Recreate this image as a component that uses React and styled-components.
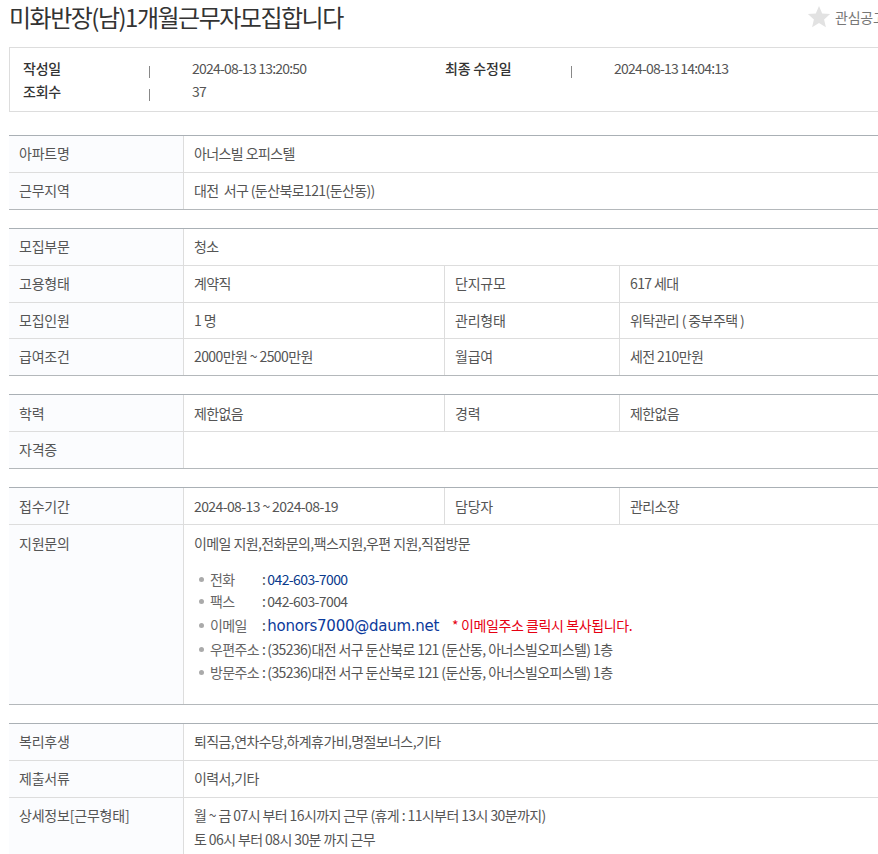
import React from 'react';
import styled, { createGlobalStyle } from 'styled-components';

const Global = createGlobalStyle`
  html, body { margin: 0; padding: 0; background: #fff; overflow: hidden; }
  body { font-family: "Noto Sans CJK KR", "Noto Sans", sans-serif; font-size: 14px; color: #555; letter-spacing: -0.2px; }
`;
const Page = styled.div`
  width: 900px;
  height: 854px;
  padding-left: 9px;
  overflow: hidden;
  box-sizing: border-box;
`;
const Head = styled.header`
  display: flex;
  justify-content: space-between;
  align-items: center;
  height: 47px;
  padding-bottom: 14px;
  box-sizing: border-box;
  width: 891px;
`;
const Title = styled.h1`
  margin: 0;
  font-size: 24px;
  font-weight: 400;
  color: #333;
  letter-spacing: -1.5px;
  line-height: 33px;
`;
const Fav = styled.div`
  display: flex;
  align-items: center;
  gap: 4px;
  color: #777;
  white-space: nowrap;
  width: 82px;
  overflow: hidden;
  margin-right: 11px;
`;
const Summary = styled.section`
  border: 1px solid #ddd;
  box-sizing: border-box;
  height: 65px;
  width: 891px;
  padding: 8px 13px 0;
  display: grid;
  grid-template-columns: 126px 43px 253px 126px 43px 253px;
  grid-auto-rows: 23px;
  align-items: center;
  margin-bottom: 23px;
`;
const SumLabel = styled.strong`
  font-weight: 500;
  color: #333;
`;
const SumSep = styled.span`
  display: block;
  width: 1px;
  height: 12px;
  margin-top: 8px;
  background: #888;
`;
const SumValue = styled.span`
  letter-spacing: -0.8px;
`;
const N = styled.span`
  letter-spacing: -0.6px;
`;
const Block = styled.section`
  width: 891px;
  border-top: 1px solid #aab0b5;
  border-bottom: 1px solid #b4b8bb;
  margin-bottom: 18px;
  &:last-child { border-bottom: 0; margin-bottom: 0; }
`;
const Row = styled.div`
  display: grid;
  grid-template-columns: ${p => p.$split ? '174px 261px 175px 1fr' : '174px 1fr'};
  min-height: ${p => p.$h || 36}px;
  & + & { border-top: 1px solid #ddd; }
  & > div { padding-top: ${p => p.$low ? 9 : 8}px; }
`;
const Th = styled.div`
  background: ${p => p.$plain ? '#fff' : '#fbfcfe'};
  padding: 0 10px;
  line-height: 18px;
  & ~ & { border-left: 1px solid #ddd; }
`;
const Td = styled.div`
  border-left: 1px solid #ddd;
  padding: 0 10px;
  line-height: 18px;
  letter-spacing: -0.6px;
  white-space: nowrap;
`;
const TwoLines = styled.div`
  line-height: 24px;
  margin-top: -3px;
`;
const Contact = styled.ul`
  list-style: none;
  margin: 16px 0 0;
  padding: 0 0 0 5px;
`;
const Item = styled.li`
  display: flex;
  align-items: baseline;
  line-height: ${p => p.$h || 22}px;
  height: ${p => p.$h || 22}px;
  white-space: nowrap;
  &::before {
    content: "";
    flex: none;
    align-self: center;
    width: 5px;
    height: 5px;
    border-radius: 50%;
    background: #aaa;
    margin-right: 6px;
  }
`;
const Key = styled.span`
  width: 52px;
  flex: none;
  color: #666;
`;
const Colon = styled.span`
  margin-right: 2px;
`;
const Phone = styled(N)`
  color: #0b3a8c;
`;
const Mail = styled.a`
  color: #0b3a9c;
  font-family: "DejaVu Sans", sans-serif;
  font-size: 15px;
  letter-spacing: -0.26px;
  text-decoration: none;
`;
const Note = styled.span`
  color: #e60012;
  margin-left: 13px;
  letter-spacing: -0.4px;
`;

const Star = () => (
  <svg width="24" height="24" viewBox="0 0 24 24" aria-hidden="true">
    <path fill="#e2e2e2" d="M12 1l3.2 7.4 7.9.7-6 5.3 1.8 7.8L12 18.1l-6.9 4.1 1.8-7.8-6-5.3 7.9-.7z" />
  </svg>
);

const S = ({ a, b, c, d, h, low }) => (
  <Row $split $h={h} $low={low}>
    <Th>{a}</Th><Td>{b}</Td><Th $plain>{c}</Th><Td>{d}</Td>
  </Row>
);
const F = ({ a, children, h, low }) => (
  <Row $h={h} $low={low}><Th>{a}</Th><Td>{children}</Td></Row>
);

const Address = () => (
  <span><N>(35236)</N>대전 서구 둔산북로 <N>121</N> (둔산동, 아너스빌오피스텔) <N>1</N>층</span>
);

export default function App() {
  return (
    <Page>
      <Global />
      <Head>
        <Title>미화반장(남)1개월근무자모집합니다</Title>
        <Fav><Star />관심공고</Fav>
      </Head>
      <Summary>
        <SumLabel>작성일</SumLabel><SumSep /><SumValue>2024-08-13 13:20:50</SumValue>
        <SumLabel>최종 수정일</SumLabel><SumSep /><SumValue>2024-08-13 14:04:13</SumValue>
        <SumLabel>조회수</SumLabel><SumSep /><SumValue>37</SumValue>
      </Summary>
      <Block>
        <F a="아파트명">아너스빌 오피스텔</F>
        <F a="근무지역">대전&nbsp; 서구 (둔산북로<N>121</N>(둔산동))</F>
      </Block>
      <Block>
        <F a="모집부문">청소</F>
        <S a="고용형태" b="계약직" c="단지규모" d={<><N>617</N> 세대</>} />
        <S a="모집인원" h={35} b={<><N>1</N> 명</>} c="관리형태" d="위탁관리 ( 중부주택 )" />
        <S a="급여조건" b={<><N>2000</N>만원 ~ <N>2500</N>만원</>} c="월급여" d={<>세전 <N>210</N>만원</>} />
      </Block>
      <Block>
        <S low a="학력" b="제한없음" c="경력" d="제한없음" />
        <F a="자격증"></F>
      </Block>
      <Block>
        <S low a="접수기간" b={<N>2024-08-13 ~ 2024-08-19</N>} c="담당자" d="관리소장" />
        <F low a="지원문의" h={179}>
          이메일 지원,전화문의,팩스지원,우편 지원,직접방문
          <Contact>
            <Item><Key>전화</Key><Colon>:</Colon><Phone>042-603-7000</Phone></Item>
            <Item><Key>팩스</Key><Colon>:</Colon><N>042-603-7004</N></Item>
            <Item $h={26}><Key>이메일</Key><Colon>:</Colon><Mail href="#">honors7000@daum.net</Mail><Note>* 이메일주소 클릭시 복사됩니다.</Note></Item>
            <Item><Key>우편주소</Key><Colon>:</Colon><Address /></Item>
            <Item $h={24}><Key>방문주소</Key><Colon>:</Colon><Address /></Item>
          </Contact>
        </F>
      </Block>
      <Block>
        <F a="복리후생">퇴직금,연차수당,하계휴가비,명절보너스,기타</F>
        <F a="제출서류">이력서,기타</F>
        <F a="상세정보[근무형태]" h={60}>
          <TwoLines>
            월 ~ 금 <N>07</N>시 부터 <N>16</N>시까지 근무 (휴게 : <N>11</N>시부터 <N>13</N>시 <N>30</N>분까지)<br />
            토 <N>06</N>시 부터 <N>08</N>시 <N>30</N>분 까지 근무
          </TwoLines>
        </F>
      </Block>
    </Page>
  );
}
